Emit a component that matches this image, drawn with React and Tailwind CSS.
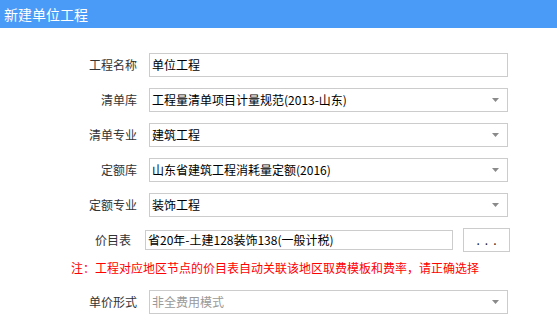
import React from 'react'

const FONT = "font-['Noto_Sans_CJK_SC','Noto_Sans',sans-serif]"

function Arrow() {
  return (
    <svg width="7" height="4" viewBox="0 0 7 4" className="absolute right-[8px] top-1/2 -translate-y-1/2">
      <path d="M0 0 H7 L3.5 4 Z" fill="#8a8a8a" />
    </svg>
  )
}

function Row({ label, value, select, muted }) {
  return (
    <div className="flex items-center h-[24px]">
      <div className="w-[137px] text-right text-[12px] text-[#333] leading-none">{label}</div>
      <div className="relative ml-[12px] w-[359px] h-[24px] border border-[#cccccc] bg-white flex items-center pl-[2px]">
        <span className={`text-[12px] leading-none ${muted ? 'text-[#999]' : 'text-black'}`}>{value}</span>
        {select && <Arrow />}
      </div>
    </div>
  )
}

export default function App() {
  return (
    <div className={`w-[557px] h-[320px] bg-white overflow-hidden ${FONT}`}>
      <div className="h-[28px] bg-[#4a9bf8] flex items-center pl-[4px]">
        <span className="text-white text-[14px] leading-none">新建单位工程</span>
      </div>

      <div className="pt-[25px] flex flex-col gap-[11px]">
        <Row label="工程名称" value="单位工程" />
        <Row label="清单库" value="工程量清单项目计量规范(2013-山东)" select />
        <Row label="清单专业" value="建筑工程" select />
        <Row label="定额库" value="山东省建筑工程消耗量定额(2016)" select />
        <Row label="定额专业" value="装饰工程" select />

        <div className="flex items-center h-[24px]">
          <div className="w-[131px] text-right text-[12px] text-[#333] leading-none">价目表</div>
          <div className="ml-[14px] w-[308px] h-[20px] border border-[#cccccc] flex items-center pl-[2px]">
            <span className="text-[12px] leading-none text-black">省20年-土建128装饰138(一般计税)</span>
          </div>
          <button className="ml-[10px] w-[47px] h-[24px] border border-[#cccccc] bg-white flex items-center justify-center">
            <span className="text-[12px] leading-none text-[#222] tracking-[5px] pl-[5px]">...</span>
          </button>
        </div>
      </div>

      <div className="mt-[8px] pl-[71px] h-[16px] flex items-center">
        <span className="text-[12px] leading-none text-[#ff0000] whitespace-nowrap">
          注：工程对应地区节点的价目表自动关联该地区取费模板和费率，请正确选择
        </span>
      </div>

      <div className="mt-[14px]">
        <Row label="单价形式" value="非全费用模式" select muted />
      </div>
    </div>
  )
}
